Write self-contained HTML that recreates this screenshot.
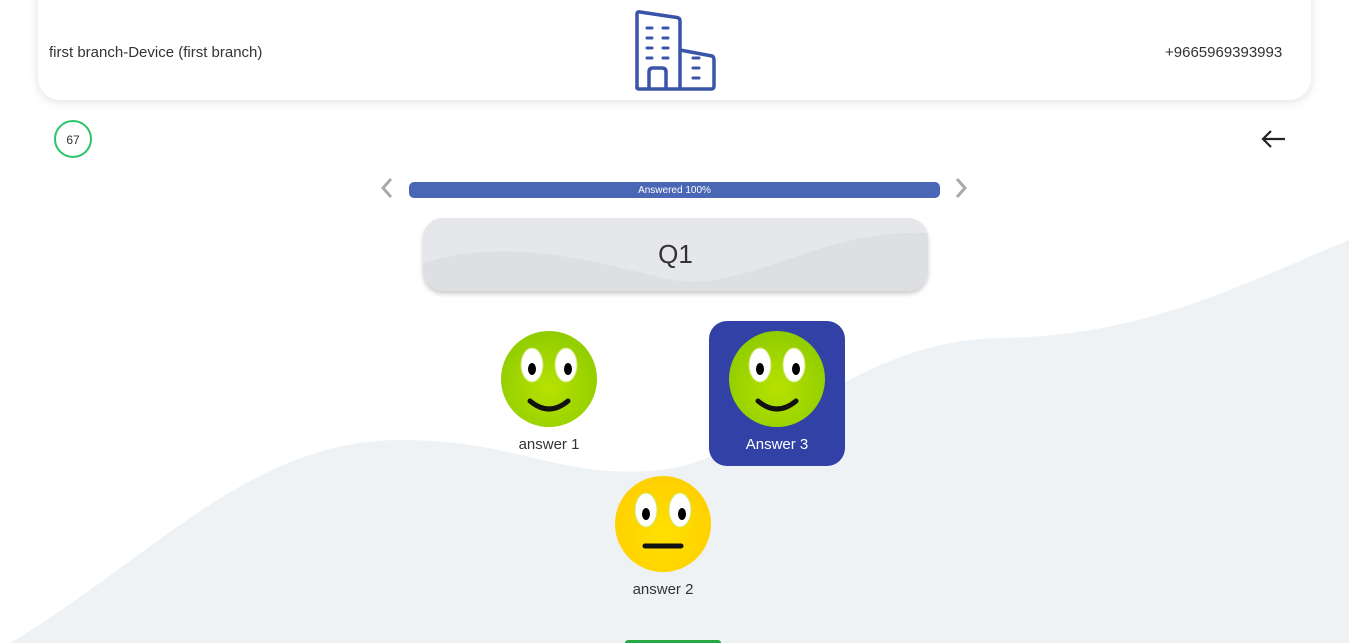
<!DOCTYPE html>
<html style="overflow:hidden;height:643px"><head><style>
body{margin:0;width:1366px;height:643px;overflow:hidden;background:#fff;font-family:"Liberation Sans",sans-serif;position:relative}
.abs{position:absolute}
.hdr{left:38px;top:-20px;width:1273px;height:120px;background:#fff;border-radius:0 0 22px 22px;box-shadow:0 2px 10px rgba(0,0,0,.12)}
.t{font-size:15px;color:#333}
.lbl{font-size:15px;color:#333;text-align:center;width:136px}
</style></head><body>
<svg class="abs" style="left:0;top:0" width="1366" height="643">
<path d="M10 643 C150 560 250 440 400 440 C520 440 560 480 660 470 C760 460 850 340 1000 338 C1150 336 1250 280 1349 240 L1349 643 Z" fill="#eef2f5"/>
</svg>
<div class="abs hdr"></div>
<div class="abs t" style="left:49px;top:44px">first branch-Device (first branch)</div>
<div class="abs t" style="left:1165px;top:44px">+9665969393993</div>
<svg class="abs" style="left:634px;top:10px" width="82" height="82" viewBox="0 0 82 82" fill="none" stroke="#3a55a8" stroke-width="3.5" stroke-linecap="round" stroke-linejoin="round">
<path d="M3 78 L3 4 Q3 1.5 6 2 L43 7.5 Q46 8 46 11 L46 78"/>
<path d="M46 40 L78 46 Q80 47 80 50 L80 76 Q80 79 77 79 L5 79 Q3 79 3 77"/>
<path d="M15 78 L15 62 Q15 58 19 58 L28 58 Q32 58 32 62 L32 78"/>
<path d="M13 18h5M29 18h5M13 28h5M29 28h5M13 38h5M29 38h5M13 48h5M29 48h5M59 48h6M59 58h6M59 68h6" stroke-width="3"/>
</svg>
<svg class="abs" style="left:53px;top:119px" width="40" height="40"><circle cx="20" cy="20" r="18" fill="none" stroke="#2bc46a" stroke-width="2"/><text x="20" y="25" font-size="12" text-anchor="middle" fill="#333" font-family="Liberation Sans">67</text></svg>
<svg class="abs" style="left:1260px;top:128px" width="28" height="22" fill="none" stroke="#222" stroke-width="2.2"><path d="M25 11H3M11 3L3 11L11 19"/></svg>
<svg class="abs" style="left:378px;top:177px" width="20" height="22" fill="none" stroke="#aaa" stroke-width="3"><path d="M13 2L5 11L13 20"/></svg>
<svg class="abs" style="left:952px;top:177px" width="20" height="22" fill="none" stroke="#aaa" stroke-width="3"><path d="M5 2L13 11L5 20"/></svg>
<div class="abs" style="left:409px;top:182px;width:531px;height:16px;background:#4a67b5;border-radius:5px;color:#fff;font-size:10px;text-align:center;line-height:17px">Answered 100%</div>
<div class="abs" style="left:423px;top:218px;width:505px;height:73px;border-radius:20px;background:#e6e7ea;box-shadow:0 3px 5px rgba(0,0,0,.2);overflow:hidden">
<svg class="abs" style="left:0;top:0" width="505" height="73"><path d="M0 45 C80 20 160 40 240 60 C320 80 390 10 505 15 L505 73 L0 73Z" fill="#dedfe3"/></svg>
<div class="abs" style="left:0;top:0;width:505px;line-height:73px;text-align:center;font-size:26px;color:#333">Q1</div></div>
<div class="abs" style="left:709px;top:321px;width:136px;height:145px;background:#3141a5;border-radius:18px"></div>
<svg width="0" height="0" style="position:absolute"><defs>
<radialGradient id="g" cx=".5" cy=".6" r=".6"><stop offset="0" stop-color="#b7e200"/><stop offset="1" stop-color="#8fcc00"/></radialGradient>
<radialGradient id="y" cx=".5" cy=".6" r=".6"><stop offset="0" stop-color="#ffe000"/><stop offset="1" stop-color="#ffcf00"/></radialGradient>
<g id="eyes"><ellipse cx="31" cy="34" rx="11" ry="17" fill="#fff" stroke="#cfe86a" stroke-width="1"/><ellipse cx="65" cy="34" rx="11" ry="17" fill="#fff" stroke="#cfe86a" stroke-width="1"/><ellipse cx="31" cy="38" rx="4" ry="6"/><ellipse cx="67" cy="38" rx="4" ry="6"/></g>
</defs></svg>
<svg class="abs" style="left:501px;top:331px" width="96" height="96"><circle cx="48" cy="48" r="48" fill="url(#g)"/><use href="#eyes"/><path d="M29 70 Q48 86 67 70" stroke="#111" stroke-width="5" fill="none" stroke-linecap="round"/></svg>
<svg class="abs" style="left:729px;top:331px" width="96" height="96"><circle cx="48" cy="48" r="48" fill="url(#g)"/><use href="#eyes"/><path d="M29 70 Q48 86 67 70" stroke="#111" stroke-width="5" fill="none" stroke-linecap="round"/></svg>
<svg class="abs" style="left:615px;top:476px" width="96" height="96"><circle cx="48" cy="48" r="48" fill="url(#y)"/><use href="#eyes"/><path d="M30 70 H66" stroke="#111" stroke-width="5" stroke-linecap="round"/></svg>
<div class="abs lbl" style="left:481px;top:436px">answer 1</div>
<div class="abs lbl" style="left:709px;top:436px;color:#fff">Answer 3</div>
<div class="abs lbl" style="left:595px;top:581px">answer 2</div>
<div class="abs" style="left:625px;top:640px;width:96px;height:3px;background:#28a745;border-radius:10px 10px 0 0"></div>
</body></html>
